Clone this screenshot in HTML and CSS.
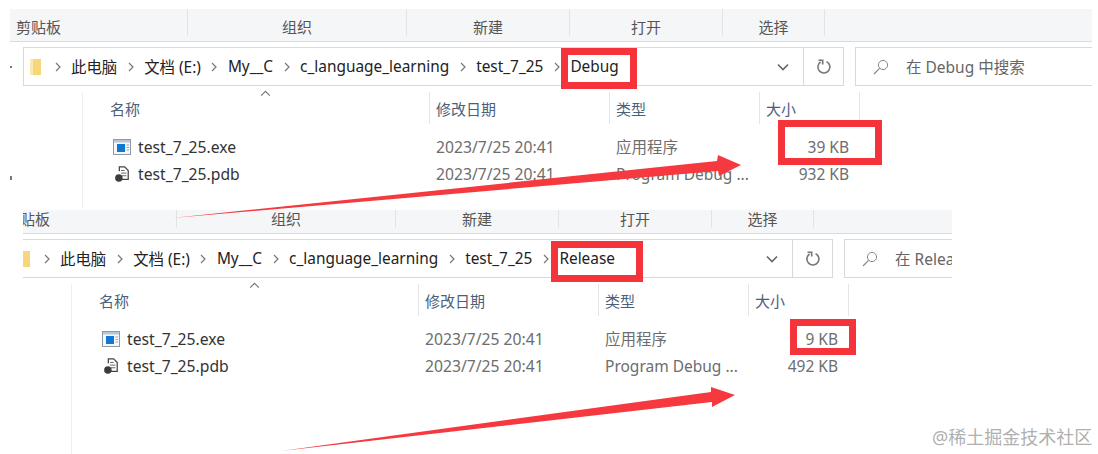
FILE: index.html
```html
<!DOCTYPE html>
<html lang="zh-CN">
<head>
    <meta charset="UTF-8">
    <title>Debug / Release</title>
    <link rel="stylesheet" href="styles.css">
</head>
<body>

<svg class="defs" width="0" height="0">
    <symbol id="chev" viewBox="0 0 6 10"><path d="M1 1l4 4-4 4" fill="none" stroke="#777" stroke-width="1.2"/></symbol>
    <symbol id="exe" viewBox="0 0 18 16">
        <rect x=".5" y=".5" width="17" height="15" fill="#f4f6f8" stroke="#8d99a6"/>
        <rect x="1" y="1" width="16" height="2.5" fill="#b9c6d3"/>
        <rect x="4" y="5" width="8" height="8" fill="#0f78d4"/>
        <path d="M13.5 6h2.5M13.5 8.5h2.5M13.5 11h2.5" stroke="#9aa5b1"/>
    </symbol>
    <symbol id="pdb" viewBox="0 0 16 18">
        <path d="M5 6V1h6l4 4v10H8" fill="#fff" stroke="#444" stroke-width="1.4"/>
        <path d="M7 5h4M7 8h6M8 11h5" stroke="#555"/>
        <circle cx="4.5" cy="13.5" r="4.2" fill="#3c3c3c"/>
    </symbol>
    <symbol id="refresh" viewBox="0 0 16 16"><path d="M10.5 2.6A6 6 0 1 1 4.6 3" fill="none" stroke="#777" stroke-width="1.6"/><path d="M2.5 1.2h4.2v4.2" fill="none" stroke="#777" stroke-width="1.6"/></symbol>
    <symbol id="search" viewBox="0 0 16 16"><circle cx="10" cy="6" r="4.6" fill="none" stroke="#888"/><path d="M6.6 9.4L1 15" stroke="#888" stroke-width="1.2"/></symbol>
    <symbol id="down" viewBox="0 0 12 8"><path d="M1 1.5l5 5 5-5" fill="none" stroke="#666" stroke-width="1.6"/></symbol>
    <symbol id="folder" viewBox="0 0 11 16"><path d="M0 0h11v16H0z" fill="#f6d77c"/><path d="M0 0h3v16H0z" fill="#fbe9b4"/></symbol>
</svg>

<section class="shot shot-debug">
    <div class="win">
        <div class="ribbon">
            <div class="group group-clip">剪贴板</div>
            <div class="group group-org">组织</div>
            <div class="group group-new">新建</div>
            <div class="group group-open">打开</div>
            <div class="group group-sel">选择</div>
        </div>
        <div class="nav">
            <div class="address">
                <svg class="folder"><use href="#folder"/></svg>
                <svg class="chev"><use href="#chev"/></svg><span>此电脑</span>
                <svg class="chev"><use href="#chev"/></svg><span>文档 (E:)</span>
                <svg class="chev"><use href="#chev"/></svg><span>My__C</span>
                <svg class="chev"><use href="#chev"/></svg><span>c_language_learning</span>
                <svg class="chev"><use href="#chev"/></svg><span>test_7_25</span>
                <svg class="chev"><use href="#chev"/></svg><span>Debug</span>
                <svg class="down"><use href="#down"/></svg>
                <div class="refresh"><svg><use href="#refresh"/></svg></div>
            </div>
            <div class="searchbox"><svg class="lens"><use href="#search"/></svg>在 Debug 中搜索</div>
        </div>
        <div class="files">
            <div class="head">
                <div class="col col-name">名称<svg class="sort" viewBox="0 0 10 6"><path d="M1 5l4-4 4 4" fill="none" stroke="#777"/></svg></div>
                <div class="col">修改日期</div>
                <div class="col">类型</div>
                <div class="col">大小</div>
            </div>
            <div class="row">
                <div class="name"><svg class="ico"><use href="#exe"/></svg>test_7_25.exe</div>
                <div class="cell date">2023/7/25 20:41</div>
                <div class="cell">应用程序</div>
                <div class="cell size">39 KB</div>
            </div>
            <div class="row">
                <div class="name"><svg class="ico"><use href="#pdb"/></svg>test_7_25.pdb</div>
                <div class="cell date">2023/7/25 20:41</div>
                <div class="cell">Program Debug ...</div>
                <div class="cell size">932 KB</div>
            </div>
        </div>
    </div>
    <i class="speck speck-a"></i>
    <i class="speck speck-b"></i>
</section>

<section class="shot shot-release">
    <div class="win">
        <div class="ribbon">
            <div class="group group-clip">剪贴板</div>
            <div class="group group-org">组织</div>
            <div class="group group-new">新建</div>
            <div class="group group-open">打开</div>
            <div class="group group-sel">选择</div>
        </div>
        <div class="nav">
            <div class="address">
                <svg class="folder"><use href="#folder"/></svg>
                <svg class="chev"><use href="#chev"/></svg><span>此电脑</span>
                <svg class="chev"><use href="#chev"/></svg><span>文档 (E:)</span>
                <svg class="chev"><use href="#chev"/></svg><span>My__C</span>
                <svg class="chev"><use href="#chev"/></svg><span>c_language_learning</span>
                <svg class="chev"><use href="#chev"/></svg><span>test_7_25</span>
                <svg class="chev"><use href="#chev"/></svg><span>Release</span>
                <svg class="down"><use href="#down"/></svg>
                <div class="refresh"><svg><use href="#refresh"/></svg></div>
            </div>
            <div class="searchbox"><svg class="lens"><use href="#search"/></svg>在 Release 中搜索</div>
        </div>
        <div class="files">
            <div class="head">
                <div class="col col-name">名称<svg class="sort" viewBox="0 0 10 6"><path d="M1 5l4-4 4 4" fill="none" stroke="#777"/></svg></div>
                <div class="col">修改日期</div>
                <div class="col">类型</div>
                <div class="col">大小</div>
            </div>
            <div class="row">
                <div class="name"><svg class="ico"><use href="#exe"/></svg>test_7_25.exe</div>
                <div class="cell date">2023/7/25 20:41</div>
                <div class="cell">应用程序</div>
                <div class="cell size">9 KB</div>
            </div>
            <div class="row">
                <div class="name"><svg class="ico"><use href="#pdb"/></svg>test_7_25.pdb</div>
                <div class="cell date">2023/7/25 20:41</div>
                <div class="cell">Program Debug ...</div>
                <div class="cell size">492 KB</div>
            </div>
        </div>
    </div>
</section>

<svg class="arrows" viewBox="0 0 1098 454">
    <polygon points="172,218 717,161 718,155 741,165 719,176 718,171"/>
    <polygon points="281,451 711,392 711,387 735,395 712,407 712,402"/>
</svg>

<div class="mark mark-debug"></div>
<div class="mark mark-39"></div>
<div class="mark mark-release"></div>
<div class="mark mark-9"></div>

<div class="watermark">@稀土掘金技术社区</div>

</body>
</html>
```

FILE: styles.css
```css
body {
    margin: 0;
    width: 1098px;
    height: 454px;
    overflow: hidden;
    position: relative;
    background-color: #fff;
    font-family: "Noto Sans", "Noto Sans CJK SC", sans-serif;
    font-size: 15.5px;
    color: #333;
}

.defs {
    position: absolute;
}

/* pasted screenshots, placed freely on the canvas */
.shot {
    position: absolute;
    overflow: hidden;
    background-color: #fff;
}

.shot-debug {
    left: 10px;
    top: 9px;
    width: 1082px;
    height: 199px;
}

.shot-release {
    left: 23px;
    top: 210px;
    width: 929px;
    height: 244px;
}

.win {
    width: 1082px;
}

.shot-release .win {
    margin: -9px 0 0 -24px;
}

/* leftovers of the crop at the left edge */
.speck {
    position: absolute;
    left: 0;
    width: 2px;
    background-color: #777;
}

.speck-a {
    top: 57px;
    height: 2px;
}

.speck-b {
    top: 167px;
    height: 4px;
}

.ribbon {
    display: flex;
    height: 32px;
    background-color: #f5f6f7;
    border-bottom: 1px solid #dcdcdc;
    color: #555;
    font-size: 15px;
}

.group {
    display: flex;
    align-items: center;
    justify-content: center;
    border-right: 1px solid #e3e3e3;
    box-sizing: border-box;
    margin-bottom: 5px;
    padding-top: 7px;
}

.group-clip {
    width: 178px;
    justify-content: flex-start;
    padding-left: 6px;
}

.group-org {
    width: 219px;
}

.group-new {
    width: 163px;
}

.group-open {
    width: 153px;
}

.group-sel {
    width: 102px;
}

.nav {
    display: flex;
    height: 39px;
    margin-top: 5px;
    padding-left: 13px;
}

.address {
    display: flex;
    align-items: center;
    width: 821px;
    box-sizing: border-box;
    border: 1px solid #d9d9d9;
    padding-left: 6px;
    gap: 10.5px;
    color: #222;
    font-size: 15.4px;
}

.folder {
    width: 11px;
    height: 16px;
    margin-right: 3px;
}

.chev {
    width: 6px;
    height: 10px;
}

.down {
    width: 12px;
    height: 8px;
    margin-left: auto;
    margin-right: 4px;
}

.refresh {
    display: flex;
    align-items: center;
    justify-content: center;
    width: 39px;
    height: 100%;
    border-left: 1px solid #d9d9d9;
}

.refresh svg {
    width: 16px;
    height: 16px;
}

.searchbox {
    display: flex;
    align-items: center;
    flex: 1;
    margin-left: 11px;
    border: 1px solid #d9d9d9;
    border-right: none;
    padding-left: 17px;
    color: #666;
    white-space: nowrap;
}

.lens {
    width: 16px;
    height: 16px;
    margin-right: 17px;
}

.files {
    margin-left: 72px;
    height: 300px;
    border-left: 1px solid #eee;
    position: relative;
}

.head {
    display: grid;
    grid-template-columns: 347px 180px 150px 100px;
    height: 32px;
    margin-top: 6px;
    color: #4c607a;
    font-size: 15px;
}

.col {
    display: flex;
    align-items: center;
    padding-left: 6px;
    border-right: 1px solid #e5e5e5;
}

.col-name {
    padding-left: 27px;
    position: relative;
}

.sort {
    position: absolute;
    left: 177px;
    top: -2px;
    width: 11px;
    height: 7px;
}

.row {
    display: grid;
    grid-template-columns: 347px 180px 150px 89px;
    height: 27px;
    align-items: center;
    color: #6d6d6d;
}

.head + .row {
    margin-top: 9px;
}

.name {
    display: flex;
    align-items: center;
    color: #333;
    padding-left: 30px;
    font-size: 15.7px;
}

.ico {
    width: 18px;
    height: 16px;
    margin-right: 7px;
}

.cell {
    padding-left: 6px;
    white-space: nowrap;
}

.date {
    font-size: 15.7px;
}

.size {
    padding: 0;
    text-align: right;
}

/* annotations drawn on top */
.arrows {
    position: absolute;
    left: 0;
    top: 0;
    width: 1098px;
    height: 454px;
    fill: #f5393f;
}

.mark {
    position: absolute;
    box-sizing: border-box;
    border: 7px solid #f5333a;
}

.mark-debug {
    left: 561px;
    top: 48px;
    width: 76px;
    height: 41px;
}

.mark-39 {
    left: 778px;
    top: 120px;
    width: 104px;
    height: 45px;
}

.mark-release {
    left: 551px;
    top: 241px;
    width: 92px;
    height: 41px;
}

.mark-9 {
    left: 790px;
    top: 319px;
    width: 66px;
    height: 36px;
}

.watermark {
    position: absolute;
    left: 932px;
    top: 423px;
    color: #b0b0b0;
    font-size: 18px;
    white-space: nowrap;
}
```
